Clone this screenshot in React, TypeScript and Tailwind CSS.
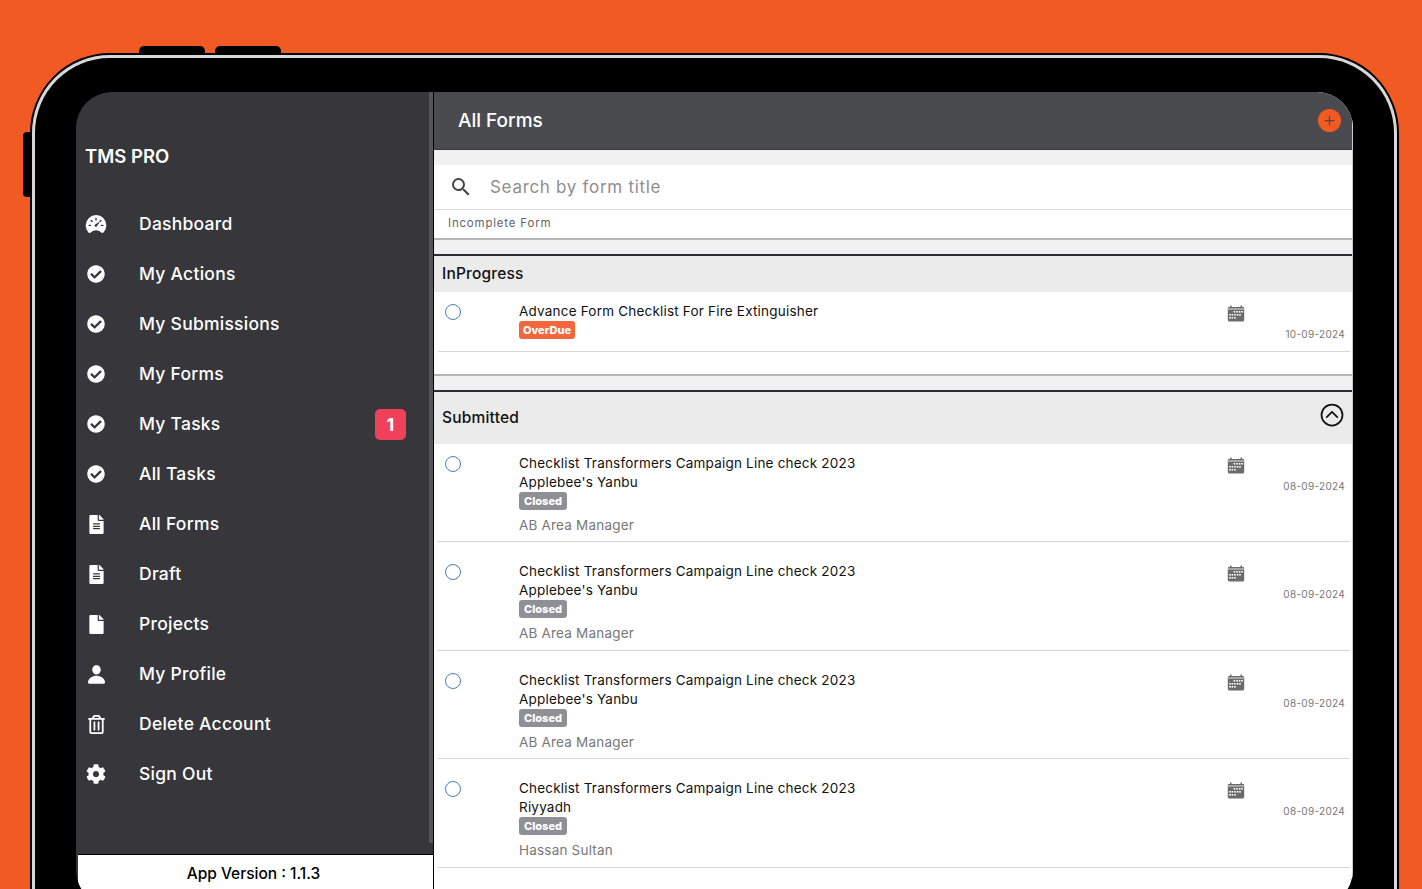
import { FaCheckCircle, FaCog, FaFile, FaFileAlt, FaRegTrashAlt } from "react-icons/fa"
import { IoChevronUpCircleOutline, IoPerson, IoSpeedometer } from "react-icons/io5"
import { MdSearch } from "react-icons/md"
import { Plus } from "lucide-react"

const menu = [
    { label: "Dashboard", icon: IoSpeedometer, size: "w-[22px] h-[22px]" },
    { label: "My Actions", icon: FaCheckCircle, size: "w-[18px] h-[18px]" },
    { label: "My Submissions", icon: FaCheckCircle, size: "w-[18px] h-[18px]" },
    { label: "My Forms", icon: FaCheckCircle, size: "w-[18px] h-[18px]" },
    { label: "My Tasks", icon: FaCheckCircle, size: "w-[18px] h-[18px]", badge: "1" },
    { label: "All Tasks", icon: FaCheckCircle, size: "w-[18px] h-[18px]" },
    { label: "All Forms", icon: FaFileAlt, size: "w-[19px] h-[19px]" },
    { label: "Draft", icon: FaFileAlt, size: "w-[19px] h-[19px]" },
    { label: "Projects", icon: FaFile, size: "w-[19px] h-[19px]" },
    { label: "My Profile", icon: IoPerson, size: "w-[21px] h-[21px]" },
    { label: "Delete Account", icon: FaRegTrashAlt, size: "w-[19px] h-[19px]" },
    { label: "Sign Out", icon: FaCog, size: "w-[20px] h-[20px]" },
]

const submitted = [
    { place: "Applebee's Yanbu", person: "AB Area Manager" },
    { place: "Applebee's Yanbu", person: "AB Area Manager" },
    { place: "Applebee's Yanbu", person: "AB Area Manager" },
    { place: "Riyyadh", person: "Hassan Sultan" },
]

const CalendarIcon = () => (
    <svg viewBox="0 0 18 18" className="w-[18px] h-[18px] text-[#6b6b6b]" fill="currentColor">
        <path d="M3 1.5h1.5v1.5h9V1.5H15V3h1.2A1 1 0 0 1 17.2 4v12a1.4 1.4 0 0 1-1.4 1.4H2.2A1.4 1.4 0 0 1 .8 16V4a1 1 0 0 1 1-1H3z" />
        <rect x="0.8" y="4.6" width="16.4" height="0.8" fill="#fff" />
        <g fill="#fff">
            <rect x="6.6" y="7" width="1.6" height="1.6" />
            <rect x="9.2" y="7" width="1.6" height="1.6" />
            <rect x="11.8" y="7" width="1.6" height="1.6" />
            <rect x="14.2" y="7" width="1.6" height="1.6" />
            <rect x="2.2" y="10" width="1.6" height="1.6" />
            <rect x="4.6" y="10" width="1.6" height="1.6" />
            <rect x="7.2" y="10" width="1.6" height="1.6" />
            <rect x="9.8" y="10" width="1.6" height="1.6" />
            <rect x="12.2" y="10" width="1.6" height="1.6" />
            <rect x="2.2" y="13" width="1.6" height="1.6" />
            <rect x="4.6" y="13" width="1.6" height="1.6" />
            <rect x="7.2" y="13" width="1.6" height="1.6" />
        </g>
    </svg>
)

const FormRow = ({ title, place, status, person, date, height }: { title: string; place?: string; status: string; person?: string; date: string; height: string }) => {
    return (
        <div className={`flex ml-[4px] mr-[2px] border-b border-[#d6d6d6] pt-[10px] ${height}`}>
            <div className="w-[81px] shrink-0 pl-[7px] pt-[2px]">
                <div className="w-4 h-4 rounded-full border-[1.5px] border-[#4a80b5]" />
            </div>
            <div className="flex-1 flex flex-col items-start">
                <div className="text-[13.5px] leading-[19px] text-[#111] tracking-[0.2px]">{title}</div>
                {place && <div className="text-[13.5px] leading-[19px] text-[#111] tracking-[0.2px]">{place}</div>}
                <div className={`h-[18px] rounded-[3px] flex items-center text-[11px] font-extrabold text-white ${status === "OverDue" ? "px-1 bg-[#f2683c]" : "px-[5px] bg-[#8f9096]"}`}>
                    {status}
                </div>
                {person && <div className="mt-[6px] text-[13.5px] leading-[19px] text-[#777] tracking-[0.2px]">{person}</div>}
            </div>
            <div className="flex flex-col items-end pr-[5px] pt-[2px]">
                <div className="mr-[100px]"><CalendarIcon /></div>
                <div className="mt-[5px] text-[10px] leading-[14px] text-[#777] tracking-[0.3px]">{date}</div>
            </div>
        </div>
    )
}

const SectionHead = ({ title, height, open }: { title: string; height: string; open?: boolean }) => {
    return (
        <div className={`flex items-center justify-between border-t-2 border-[#2c2c30] bg-[#ebebeb] pl-2 pr-[6px] ${height}`}>
            <div className="text-[15.5px] font-medium text-[#111] tracking-[0.2px]">{title}</div>
            {open && <IoChevronUpCircleOutline className="-mt-[7px] text-[28px] text-[#111]" />}
        </div>
    )
}

const App = () => {
    return (
        <div className="relative w-[1422px] h-[889px] overflow-hidden bg-[#f15a22] pt-[53px] pl-[30px] font-['Inter',sans-serif]">
            {/* tablet buttons */}
            <div className="absolute left-[139px] top-[46px] w-[66px] h-[8px] rounded-t-[5px] bg-black" />
            <div className="absolute left-[215px] top-[46px] w-[66px] h-[8px] rounded-t-[5px] bg-black" />
            <div className="absolute left-[23px] top-[132px] w-[9px] h-[65px] rounded-l-[4px] bg-black" />

            <div className="w-[1369px] h-[960px] rounded-[80px] border-2 border-black bg-[#d8d8d8] p-[3px]">
                <div className="h-full rounded-[75px] bg-black pl-[41px] pr-[41px] pt-[34px]">
                    <div className="flex h-[814px] rounded-[36px] overflow-hidden">
                        {/* sidebar */}
                        <div className="relative w-[353px] shrink-0 bg-[#36363b] flex flex-col">
                            <div className="pl-[9px] pt-[52px] h-[107px] text-[18.5px] leading-[24px] font-semibold text-white">TMS PRO</div>
                            <div className="flex flex-col">
                                {menu.map((item) => (
                                    <div key={item.label} className="flex items-center h-[50px] pl-[10px] text-white">
                                        <div className="w-[20px] shrink-0 flex justify-center">
                                            <item.icon className={`${item.size} shrink-0`} />
                                        </div>
                                        <div className="ml-[33px] flex-1 text-[17.5px] font-medium tracking-[0.25px]">{item.label}</div>
                                        {item.badge && (
                                            <div className="mr-[23px] w-[31px] h-[31px] rounded-[5px] bg-[#ef4159] flex items-center justify-center text-[18px] font-bold">
                                                {item.badge}
                                            </div>
                                        )}
                                    </div>
                                ))}
                            </div>
                            <div className="mt-auto ml-[2px] -mr-[4px] pr-[4px] h-[52px] relative z-10 border-t border-black bg-white pt-[8px] text-center text-[15.5px] leading-[22px] font-medium text-black">
                                App Version : 1.1.3
                            </div>
                        </div>
                        {/* scrollbar */}
                        <div className="w-[5px] shrink-0 bg-[#36363b] border-r border-black">
                            <div className="h-[751px] bg-[#55565a]" />
                        </div>

                        {/* main */}
                        <div className="flex-1 bg-white flex flex-col border-r border-[#c8cccc]">
                            <div className="flex items-center justify-between h-[58px] shrink-0 bg-[#4a4b4f] pl-6 pr-[11px] border-b border-[#3a3a3e]">
                                <div className="pt-[2px] text-[19px] font-medium text-white">All Forms</div>
                                <div className="w-[23px] h-[23px] rounded-full bg-[#f15a22] flex items-center justify-center">
                                    <Plus className="w-[15px] h-[15px] text-[#4a4b4f]" strokeWidth={2} />
                                </div>
                            </div>
                            <div className="h-[15px] shrink-0 bg-[#f1f1f1]" />
                            <div className="flex items-center h-[45px] shrink-0 border-b border-[#dcdcdc] pl-[15px]">
                                <MdSearch className="text-[24px] text-[#444]" />
                                <div className="ml-[17px] pt-[2px] text-[17px] text-[#8e8e8e] tracking-[0.7px]">Search by form title</div>
                            </div>
                            <div className="flex items-center h-[30px] shrink-0 border-b-2 border-[#b5b5b5] pl-[14px] text-[11.5px] text-[#666] tracking-[0.8px]">
                                Incomplete Form
                            </div>
                            <div className="h-[14px] shrink-0 bg-[#f1f1f1]" />
                            <SectionHead title="InProgress" height="h-[38px] shrink-0" />
                            <FormRow title="Advance Form Checklist For Fire Extinguisher" status="OverDue" date="10-09-2024" height="h-[60px] shrink-0" />
                            <div className="h-[24px] shrink-0 border-b-2 border-[#b5b5b5]" />
                            <div className="h-[14px] shrink-0 bg-[#f1f1f1]" />
                            <SectionHead title="Submitted" height="h-[54px] shrink-0" open />
                            <div className="flex flex-col gap-[10px]">
                                {submitted.map((row, i) => (
                                    <FormRow
                                        key={i}
                                        title="Checklist Transformers Campaign Line check 2023"
                                        place={row.place}
                                        status="Closed"
                                        person={row.person}
                                        date="08-09-2024"
                                        height="h-[98.4px] shrink-0"
                                    />
                                ))}
                            </div>
                        </div>
                    </div>
                </div>
            </div>
        </div>
    )
}

export default App
